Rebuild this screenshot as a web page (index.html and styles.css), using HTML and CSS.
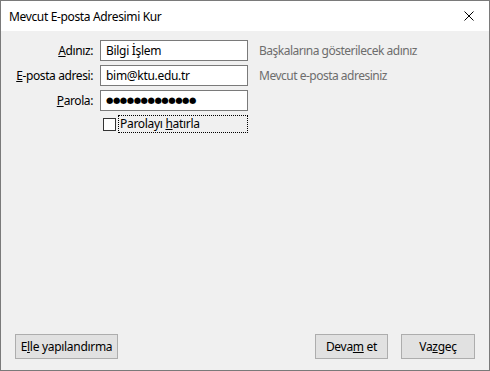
FILE: index.html
```html
<!DOCTYPE html>
<html lang="tr">
<head>
	<meta charset="UTF-8">
	<title>Mevcut E-posta Adresimi Kur</title>
	<link rel="stylesheet" href="styles.css">
</head>
<body>
	<div class="window">
		<div class="titlebar">
			<span class="title">Mevcut E-posta Adresimi Kur</span>
			<svg class="close" width="10" height="10" viewBox="0 0 10 10">
				<path d="M0.5 0.5 L9.5 9.5 M9.5 0.5 L0.5 9.5" stroke="#000" stroke-width="1" fill="none"/>
			</svg>
		</div>
		<div class="content">
			<div class="form">
				<label for="name"><u>A</u>dınız:</label>
				<input type="text" id="name" value="Bilgi İşlem">
				<span class="hint">Başkalarına gösterilecek adınız</span>

				<label for="email"><u>E</u>-posta adresi:</label>
				<input type="text" id="email" value="bim@ktu.edu.tr">
				<span class="hint">Mevcut e-posta adresiniz</span>

				<label for="pass"><u>P</u>arola:</label>
				<div class="pass" id="pass">●●●●●●●●●●●●●</div>
				<span class="hint"></span>

				<span></span>
				<div class="remember">
					<span class="check"></span>
					<span class="focus">Parolayı <u>h</u>atırla</span>
				</div>
			</div>
			<div class="footer">
				<button>E<u>l</u>le yapılandırma</button>
				<div class="right">
					<button class="devam">Deva<u>m</u> et</button>
					<button class="vazgec">Va<u>z</u>geç</button>
				</div>
			</div>
		</div>
	</div>
</body>
</html>
```

FILE: styles.css
```css
body{
	margin: 0;
	padding: 0;
	font: 11px "Noto Sans", "Liberation Sans", sans-serif;
	letter-spacing: -0.25px;
	color: #000;
}
.window{
	width: 490px;
	height: 371px;
	box-sizing: border-box;
	border: 1px solid #7a7a7a;
	display: flex;
	flex-direction: column;
}
.titlebar{
	height: 30px;
	background: #fff;
	display: flex;
	align-items: center;
	justify-content: space-between;
	padding: 0 15px 0 8px;
	flex-shrink: 0;
}
.title{
	font-size: 12px;
	letter-spacing: -0.35px;
}
.content{
	flex: 1;
	background: #f0f0f0;
	display: flex;
	flex-direction: column;
	justify-content: space-between;
	padding: 9px 14px 11px 14px;
}
.form{
	display: grid;
	grid-template-columns: 78px 148px auto;
	column-gap: 7px;
	row-gap: 4px;
	align-items: center;
}
.form label{
	text-align: right;
	white-space: nowrap;
	font-size: 12px;
	letter-spacing: -0.4px;
}
.form input, .form .pass{
	height: 21px;
	box-sizing: border-box;
	border: 1px solid #7a7a7a;
	background: #fff;
	font: inherit;
	font-size: 12px;
	letter-spacing: -0.3px;
	padding: 0 5px;
	margin: 0;
	outline: none;
}
.form .pass{
	font-family: "DejaVu Sans", sans-serif;
	font-size: 8.5px;
	line-height: 19px;
	letter-spacing: -0.5px;
	padding-left: 5px;
}
.hint{
	color: #6d6d6d;
	padding-left: 4px;
	white-space: nowrap;
	font-size: 12px;
	letter-spacing: -0.5px;
}
.remember{
	display: flex;
	align-items: center;
	padding-left: 3px;
	height: 18px;
}
.check{
	width: 13px;
	height: 13px;
	box-sizing: border-box;
	border: 1px solid #333;
	background: #fff;
	margin-right: 2px;
}
.focus{
	flex: 1;
	border: 1px dotted #000;
	line-height: 16px;
	padding-left: 1px;
	font-size: 12px;
	letter-spacing: -0.3px;
}
.footer{
	display: flex;
	justify-content: space-between;
}
.footer .right{
	display: flex;
	gap: 13px;
}
button{
	height: 25px;
	background: #e1e1e1;
	border: 1px solid #adadad;
	font: inherit;
	font-size: 12px;
	letter-spacing: -0.3px;
	color: #000;
	padding: 0;
	width: 103px;
}
.devam{
	width: 73px;
}
.vazgec{
	width: 74px;
}
```
